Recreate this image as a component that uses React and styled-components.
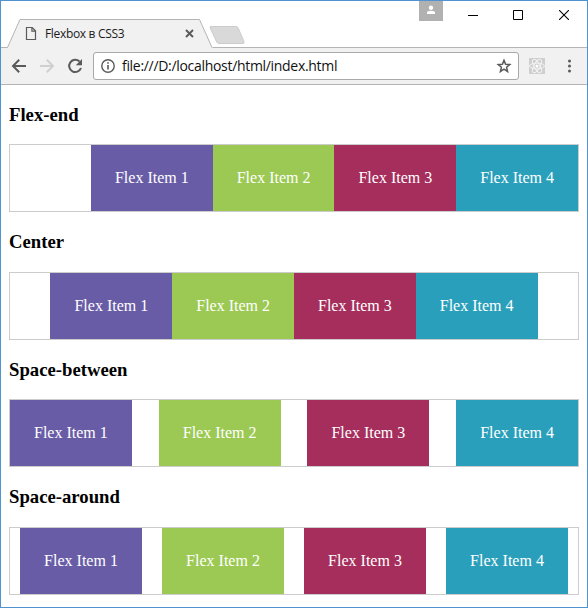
import React from "react";
import styled, { createGlobalStyle } from "styled-components";

const GlobalStyle = createGlobalStyle`
  * { box-sizing: border-box; }
  body { margin: 0; background: #fff; overflow: hidden; }
  svg { display: block; flex: none; }
`;

const Window = styled.div`
  width: 588px;
  height: 608px;
  border: 1px solid #4f93d1;
  background: #fff;
  display: flex;
  flex-direction: column;
  overflow: hidden;
`;

const TabStrip = styled.header`
  height: 47px;
  flex: none;
  display: flex;
  background: linear-gradient(#b4b4b4, #b4b4b4) 0 46px / 100% 1px no-repeat #fff;
`;

const Tab = styled.div`
  position: relative;
  width: 207px;
  height: 29px;
  margin: 18px 0 0 5px;
  padding-left: 19px;
  display: flex;
  align-items: center;
  font: 12px/16px "Open Sans", "Noto Sans", sans-serif;
  color: #1b1b1b;
`;

const TabShape = styled.svg`
  position: absolute;
  left: 0;
  top: 0;
`;

const TabContent = styled.div`
  position: relative;
  display: flex;
  align-items: center;
  width: 170px;
  height: 29px;
`;

const TabTitle = styled.span`
  margin: 1px 0 0 8px;
  width: 140px;
  letter-spacing: -0.33px;
  white-space: nowrap;
`;

const NewTab = styled.svg`
  margin: 24px 0 0 -5px;
`;

const Controls = styled.div`
  margin-left: auto;
  display: flex;
`;

const Profile = styled.div`
  width: 24px;
  height: 20px;
  margin-right: 25px;
  background: #b1b1b1;
`;

const ControlGlyph = styled.svg`
  margin: 9px ${(p) => p.$gap}px 0 0;
`;

const Toolbar = styled.nav`
  height: 37px;
  flex: none;
  display: flex;
  align-items: center;
  background: #f1f1f1;
  border-bottom: 1px solid #b4b4b4;
  padding-left: 10px;
`;

const ToolIcon = styled.svg`
  margin-right: ${(p) => p.$gap}px;
`;

const AddressBar = styled.div`
  width: 426px;
  height: 28px;
  border: 1px solid #a8a8a8;
  border-radius: 3px;
  background: #fff;
  display: flex;
  align-items: center;
  padding: 0 6px 0 7px;
`;

const Url = styled.span`
  flex: 1;
  margin-left: 7px;
  font: 14px/20px "Open Sans", "Noto Sans", sans-serif;
  letter-spacing: -0.31px;
  color: #111;
  white-space: nowrap;
`;

const Page = styled.main`
  padding: 18.65px 8px 0;
  font: 16px/18px "Liberation Serif", "Times New Roman", serif;
`;

const Heading = styled.h3`
  margin: 0 0 18.75px;
  font-size: 18.72px;
  line-height: 22px;
  font-weight: bold;
  color: #000;
`;

const FlexRow = styled.div`
  display: flex;
  justify-content: ${(p) => p.$justify};
  height: 68px;
  margin-bottom: 18.75px;
  border: 1px solid #ccc;
`;

const Item = styled.div`
  padding: 24px;
  background: ${(p) => p.$color};
  color: #fff;
  white-space: nowrap;
`;

const sections = [
  ["Flex-end", "flex-end"],
  ["Center", "center"],
  ["Space-between", "space-between"],
  ["Space-around", "space-around"],
];

const colors = ["#685ca7", "#9bc953", "#a52e5c", "#2a9fbc"];

function Browser() {
  return (
    <>
      <TabStrip>
        <Tab>
          <TabShape width="207" height="29" viewBox="0 0 207 29">
            <path d="M0 28.5H1.5L14 .5H193.5L206 28.5H207V29H0z" fill="#f1f1f1" />
            <path d="M0 28.5H1.5L14 .5H193.5L206 28.5" fill="none" stroke="#b4b4b4" />
          </TabShape>
          <TabContent>
            <svg width="12" height="15" viewBox="0 0 12 15" fill="none" stroke="#5a5a5a" strokeWidth="1.2">
              <path d="M1.5 1.5H7.2L10.5 4.8V13.5H1.5zM6.9 1.5V5.1H10.5" />
            </svg>
            <TabTitle>Flexbox в CSS3</TabTitle>
            <svg width="9" height="9" viewBox="0 0 9 9">
              <path d="M1 1L8 8M8 1L1 8" stroke="#5a5a5a" strokeWidth="1.9" />
            </svg>
          </TabContent>
        </Tab>
        <NewTab width="38" height="20" viewBox="0 0 38 20">
          <path d="M3 1.5H28Q29.5 1.5 30.2 3L36 16.5Q36.5 18.5 35 18.5H11Q9.5 18.5 8.7 17L2.2 3Q1.5 1.5 3 1.5z" fill="#d9d9d9" stroke="#cccccc" />
        </NewTab>
        <Controls>
          <Profile>
            <svg width="24" height="20" viewBox="0 0 24 20" fill="#fff">
              <circle cx="12" cy="6.8" r="2.2" />
              <path d="M8 13V11.6Q8 9.7 12 9.7T16 11.6V13z" />
            </svg>
          </Profile>
          <ControlGlyph $gap={35} width="10" height="10" viewBox="0 0 10 10">
            <path d="M0 5.5H10" stroke="#000" />
          </ControlGlyph>
          <ControlGlyph $gap={36} width="10" height="10" viewBox="0 0 10 10">
            <path d="M.5 .5H9.5V9.5H.5z" fill="none" stroke="#000" />
          </ControlGlyph>
          <ControlGlyph $gap={18} width="10" height="10" viewBox="0 0 10 10">
            <path d="M0 0L10 10M10 0L0 10" stroke="#000" strokeWidth="1.1" />
          </ControlGlyph>
        </Controls>
      </TabStrip>
      <Toolbar>
        <ToolIcon $gap={12} width="16" height="16" viewBox="0 0 16 16" fill="none" stroke="#5a5a5a" strokeWidth="2">
          <path d="M15 8H2.5M8.2 1.7L2 8L8.2 14.3" />
        </ToolIcon>
        <ToolIcon $gap={12} width="16" height="16" viewBox="0 0 16 16" fill="none" stroke="#d0d0d0" strokeWidth="2">
          <path d="M1 8H13.5M7.8 1.7L14 8L7.8 14.3" />
        </ToolIcon>
        <ToolIcon $gap={10} width="16" height="16" viewBox="0 0 16 16">
          <path d="M12.5 3.5A6.1 6.1 0 1 0 14 10" fill="none" stroke="#5a5a5a" strokeWidth="2" />
          <path d="M15 1V7.2H8.8z" fill="#5a5a5a" />
        </ToolIcon>
        <AddressBar>
          <svg width="14" height="14" viewBox="0 0 14 14">
            <circle cx="7" cy="7" r="6.2" fill="none" stroke="#5a5a5a" strokeWidth="1.4" />
            <path d="M7 3.2V4.8M7 6V10.5" stroke="#5a5a5a" strokeWidth="1.6" />
          </svg>
          <Url>file:///D:/localhost/html/index.html</Url>
          <svg width="16" height="16" viewBox="0 0 16 16">
            <path d="M8 2.2L9.6 6.2L13.8 6.5L10.6 9.3L11.6 13.5L8 11.2L4.4 13.5L5.4 9.3L2.2 6.5L6.4 6.2z" fill="none" stroke="#5a5a5a" strokeWidth="1.5" />
          </svg>
        </AddressBar>
        <ToolIcon $gap={23} width="26" height="16" viewBox="-10 0 26 16">
          <path d="M0 0H16V16H0z" fill="#cfcfcf" />
          <g fill="none" stroke="#f3f3f3" strokeWidth="1">
            <ellipse cx="8" cy="8" rx="7.4" ry="2.9" />
            <ellipse cx="8" cy="8" rx="7.4" ry="2.9" transform="rotate(60 8 8)" />
            <ellipse cx="8" cy="8" rx="7.4" ry="2.9" transform="rotate(120 8 8)" />
          </g>
          <circle cx="8" cy="8" r="1.5" fill="#fff" />
        </ToolIcon>
        <svg width="3" height="14" viewBox="0 0 3 14" fill="#5a5a5a">
          <circle cx="1.5" cy="2" r="1.5" />
          <circle cx="1.5" cy="7" r="1.5" />
          <circle cx="1.5" cy="12" r="1.5" />
        </svg>
      </Toolbar>
    </>
  );
}

export default function App() {
  return (
    <>
      <GlobalStyle />
      <Window>
        <Browser />
        <Page>
          {sections.map(([title, justify]) => (
            <section key={title}>
              <Heading>{title}</Heading>
              <FlexRow $justify={justify}>
                {colors.map((color, i) => (
                  <Item key={color} $color={color}>{`Flex Item ${i + 1}`}</Item>
                ))}
              </FlexRow>
            </section>
          ))}
        </Page>
      </Window>
    </>
  );
}
